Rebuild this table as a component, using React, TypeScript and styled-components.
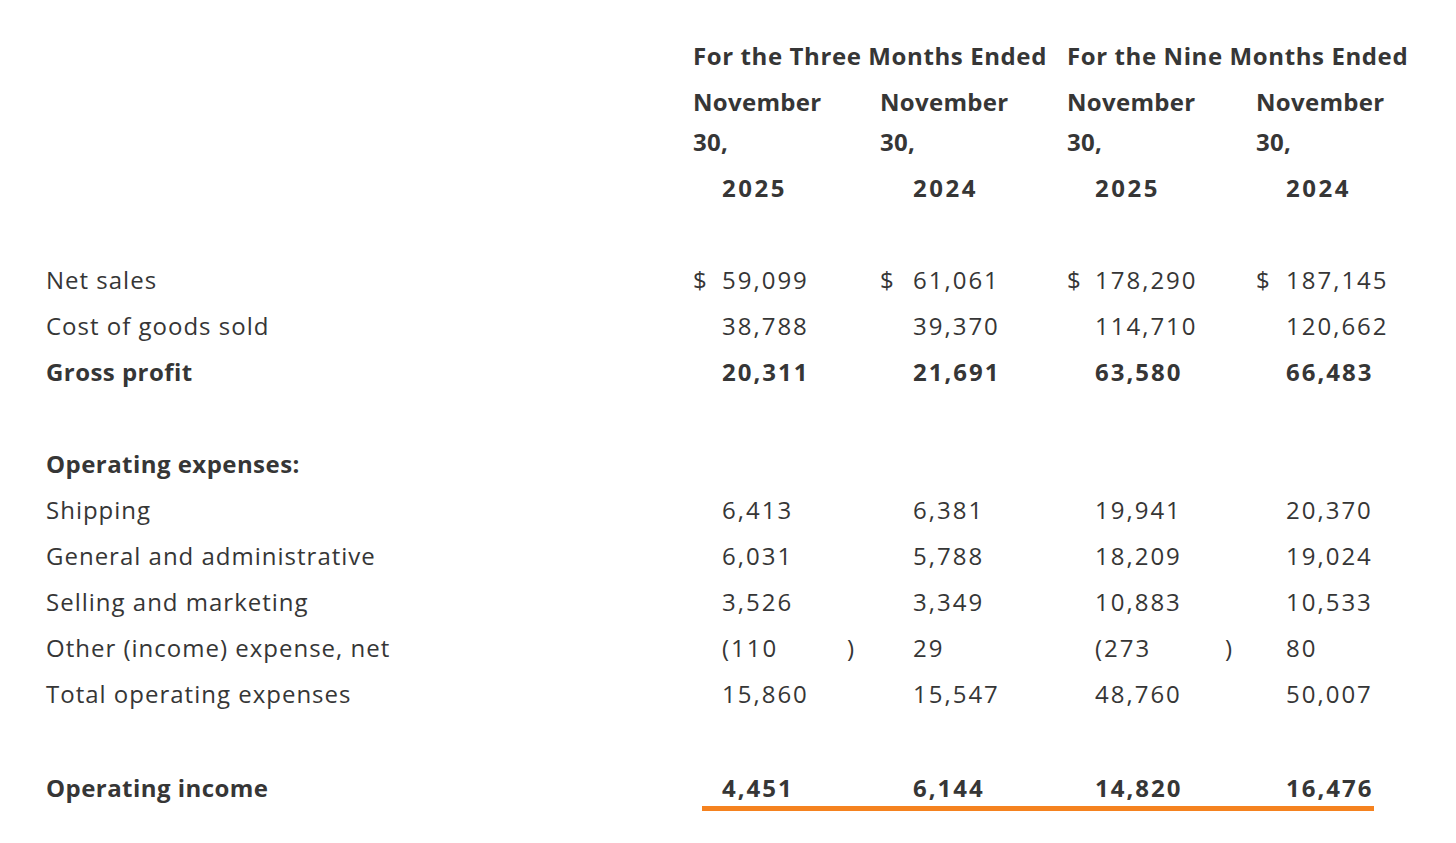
import {FunctionComponent, Fragment} from 'react'
import styled, {createGlobalStyle} from 'styled-components'

const GlobalStyle = createGlobalStyle`
  body {
    margin: 0;
    background: #ffffff;
    color: #363636;
    font-family: "Open Sans", "Noto Sans", sans-serif;
    font-size: 24px;
  }
`

// offsets of the number inside each period column, and its paren
const COLS = [
    {width: 187, dollar: 29, paren: 154},
    {width: 187, dollar: 33, paren: 154},
    {width: 189, dollar: 28, paren: 158},
    {width: 190, dollar: 30, paren: 154},
]

const Sheet = styled.div`
  display: grid;
  grid-template-columns: 647px ${COLS.map((c) => `${c.width}px`).join(' ')};
  padding: 30px 0 0 46px;
`

const Label = styled.div<{$bold?: boolean}>`
  height: 46px;
  line-height: 46px;
  font-weight: ${(p) => (p.$bold ? 700 : 400)};
  letter-spacing: ${(p) => (p.$bold ? 0.45 : 1)}px;
  white-space: nowrap;
`

const PeriodHead = styled.div`
  grid-column: span 2;
  line-height: 52px;
  font-weight: 700;
  letter-spacing: 0.6px;
  white-space: nowrap;
`

const DateHead = styled.div`
  line-height: 40px;
  font-weight: 700;
  letter-spacing: 0.3px;
`

const Cell = styled.div<{$dollar: number; $paren: number; $bold?: boolean; $tall?: boolean}>`
  display: grid;
  grid-template-columns: ${(p) => `${p.$dollar}px ${p.$paren - p.$dollar}px auto`};
  height: ${(p) => (p.$tall ? 52 : 46)}px;
  line-height: ${(p) => (p.$tall ? 52 : 46)}px;
  font-weight: ${(p) => (p.$bold ? 700 : 400)};
  white-space: nowrap;
`

const Num = styled.span<{$wide?: boolean}>`
  letter-spacing: ${(p) => (p.$wide ? 2.5 : 2)}px;
`

const Spacer = styled.div<{$h: number}>`
  grid-column: 1 / -1;
  height: ${(p) => p.$h}px;
`

const Rule = styled.div`
  grid-column: 2 / -1;
  width: 672px;
  height: 5px;
  margin: -5px 0 0 9px;
  background: #f5821f;
`

type Line = {label: string; values?: string[]; bold?: boolean; dollar?: boolean}

const LINES: (Line | null)[] = [
    {label: 'Net sales', values: ['59,099', '61,061', '178,290', '187,145'], dollar: true},
    {label: 'Cost of goods sold', values: ['38,788', '39,370', '114,710', '120,662']},
    {label: 'Gross profit', values: ['20,311', '21,691', '63,580', '66,483'], bold: true},
    null,
    {label: 'Operating expenses:', bold: true},
    {label: 'Shipping', values: ['6,413', '6,381', '19,941', '20,370']},
    {label: 'General and administrative', values: ['6,031', '5,788', '18,209', '19,024']},
    {label: 'Selling and marketing', values: ['3,526', '3,349', '10,883', '10,533']},
    {label: 'Other (income) expense, net', values: ['(110', '29', '(273', '80']},
    {label: 'Total operating expenses', values: ['15,860', '15,547', '48,760', '50,007']},
    null,
    {label: 'Operating income', values: ['4,451', '6,144', '14,820', '16,476'], bold: true},
]

const App: FunctionComponent = () => (
    <>
        <GlobalStyle/>
        <Sheet>
            <div/>
            <PeriodHead>For the Three Months Ended</PeriodHead>
            <PeriodHead>For the Nine Months Ended</PeriodHead>

            <div/>
            {COLS.map((_, i) => (
                <DateHead key={i}>November<br/>30,</DateHead>
            ))}

            <div/>
            {['2025', '2024', '2025', '2024'].map((y, i) => (
                <Cell key={i} $dollar={COLS[i].dollar} $paren={COLS[i].paren} $bold $tall>
                    <span/>
                    <Num $wide>{y}</Num>
                </Cell>
            ))}

            <Spacer $h={43}/>

            {LINES.map((line, r) => {
                if (!line) return <Spacer key={r} $h={r === 10 ? 48 : 46}/>
                return (
                    <Fragment key={r}>
                        <Label $bold={line.bold}>{line.label}</Label>
                        {COLS.map((c, i) => {
                            const v = line.values?.[i]
                            return (
                                <Cell key={i} $dollar={c.dollar} $paren={c.paren} $bold={line.bold}>
                                    <span>{line.dollar ? '$' : ''}</span>
                                    <Num>{v}</Num>
                                    <span>{v?.startsWith('(') ? ')' : ''}</span>
                                </Cell>
                            )
                        })}
                    </Fragment>
                )
            })}
            <Rule/>
        </Sheet>
    </>
)

export default App
